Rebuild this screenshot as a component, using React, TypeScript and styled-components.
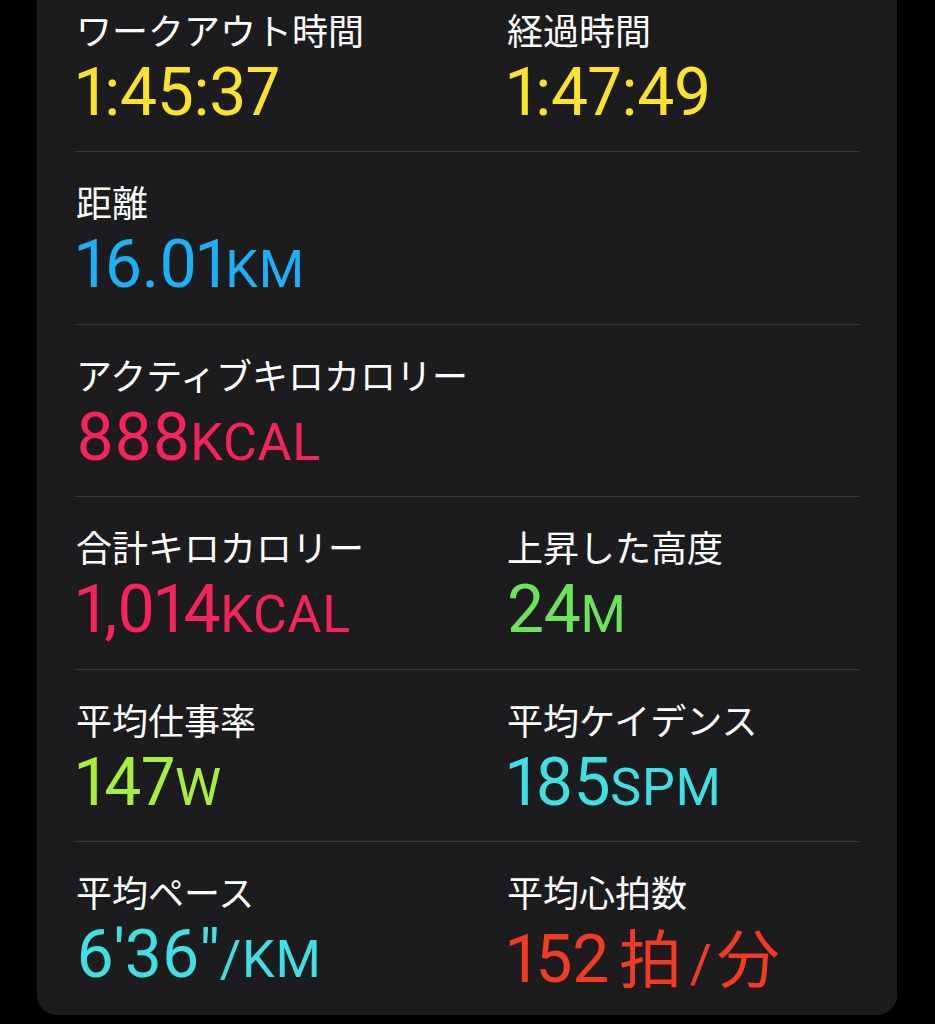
import styled, { createGlobalStyle } from 'styled-components'

const GlobalStyle = createGlobalStyle`
    html, body {
        margin: 0;
        padding: 0;
        background: #000;
    }
    body {
        font-family: Roboto, 'Noto Sans CJK JP', sans-serif;
        -webkit-font-smoothing: antialiased;
    }
`

const colors = {
    card: '#1c1c1e',
    divider: '#38383a',
    label: '#ffffff',
    yellow: '#fae32a',
    blue: '#1cb0f6',
    pink: '#f6245a',
    green: '#6de35c',
    lime: '#a6ef3b',
    cyan: '#3fdfe2',
    red: '#f33b24',
}

type Metric = {
    label: string
    value: string
    unit?: string
    color: string
    jp?: boolean
}

const rows: Metric[][] = [
    [
        { label: 'ワークアウト時間', value: '1:45:37', color: colors.yellow },
        { label: '経過時間', value: '1:47:49', color: colors.yellow },
    ],
    [{ label: '距離', value: '16.01', unit: 'KM', color: colors.blue }],
    [
        {
            label: 'アクティブキロカロリー',
            value: '888',
            unit: 'KCAL',
            color: colors.pink,
        },
    ],
    [
        {
            label: '合計キロカロリー',
            value: '1,014',
            unit: 'KCAL',
            color: colors.pink,
        },
        { label: '上昇した高度', value: '24', unit: 'M', color: colors.green },
    ],
    [
        { label: '平均仕事率', value: '147', unit: 'W', color: colors.lime },
        {
            label: '平均ケイデンス',
            value: '185',
            unit: 'SPM',
            color: colors.cyan,
        },
    ],
    [
        {
            label: '平均ペース',
            value: '6\'36"',
            unit: '/KM',
            color: colors.cyan,
        },
        { label: '平均心拍数', value: '152', color: colors.red, jp: true },
    ],
]

const Screen = styled.div`
    min-height: 1024px;
    padding: 0 38px 9px 37px;
    margin-top: -20.5px;
    box-sizing: border-box;
`

const Card = styled.div`
    background: ${colors.card};
    border-radius: 20px;
    padding: 0 37px 0 38px;
`

const Row = styled.div`
    display: grid;
    grid-template-columns: 431px 1fr;
    height: 172.5px;
    box-sizing: border-box;
    padding: 31px 0 0 1px;
    border-bottom: 1px solid ${colors.divider};

    &:last-child {
        border-bottom: none;
    }
`

const Cell = styled.div`
    display: flex;
    flex-direction: column;
    gap: 14px;
`

const Label = styled.div`
    font-family: 'Noto Sans CJK JP', sans-serif;
    font-size: 36px;
    line-height: 36px;
    color: ${colors.label};
    white-space: nowrap;
`

const Value = styled.div<{ $color: string }>`
    font-family: Roboto, 'Noto Sans CJK JP', sans-serif;
    font-size: 66px;
    line-height: 64px;
    color: ${({ $color }) => $color};
    font-variant-numeric: proportional-nums;
    letter-spacing: -0.3px;
    white-space: nowrap;
`

const Unit = styled.span`
    font-size: 52px;
    letter-spacing: 0.8px;
`

const Kanji = styled.span`
    font-family: 'Noto Sans CJK JP', sans-serif;
    font-size: 63px;
`

const Slash = styled.span`
    font-size: 54px;
    margin: 0 5px 0 8px;
`

const Gap = styled.span`
    margin-left: -6px;
`

const MetricCell = ({ label, value, unit, color, jp }: Metric) => (
    <Cell>
        <Label>{label}</Label>
        <Value $color={color}>
            {value}
            {unit && <Unit>{unit}</Unit>}
            {jp && (
                <>
                    {' '}
                    <Gap />
                    <Kanji>拍</Kanji>
                    <Slash>/</Slash>
                    <Kanji>分</Kanji>
                </>
            )}
        </Value>
    </Cell>
)

export default function App() {
    return (
        <>
            <GlobalStyle />
            <Screen>
                <Card>
                    {rows.map((row, i) => (
                        <Row key={i}>
                            {row.map((m) => (
                                <MetricCell key={m.label} {...m} />
                            ))}
                        </Row>
                    ))}
                </Card>
            </Screen>
        </>
    )
}
